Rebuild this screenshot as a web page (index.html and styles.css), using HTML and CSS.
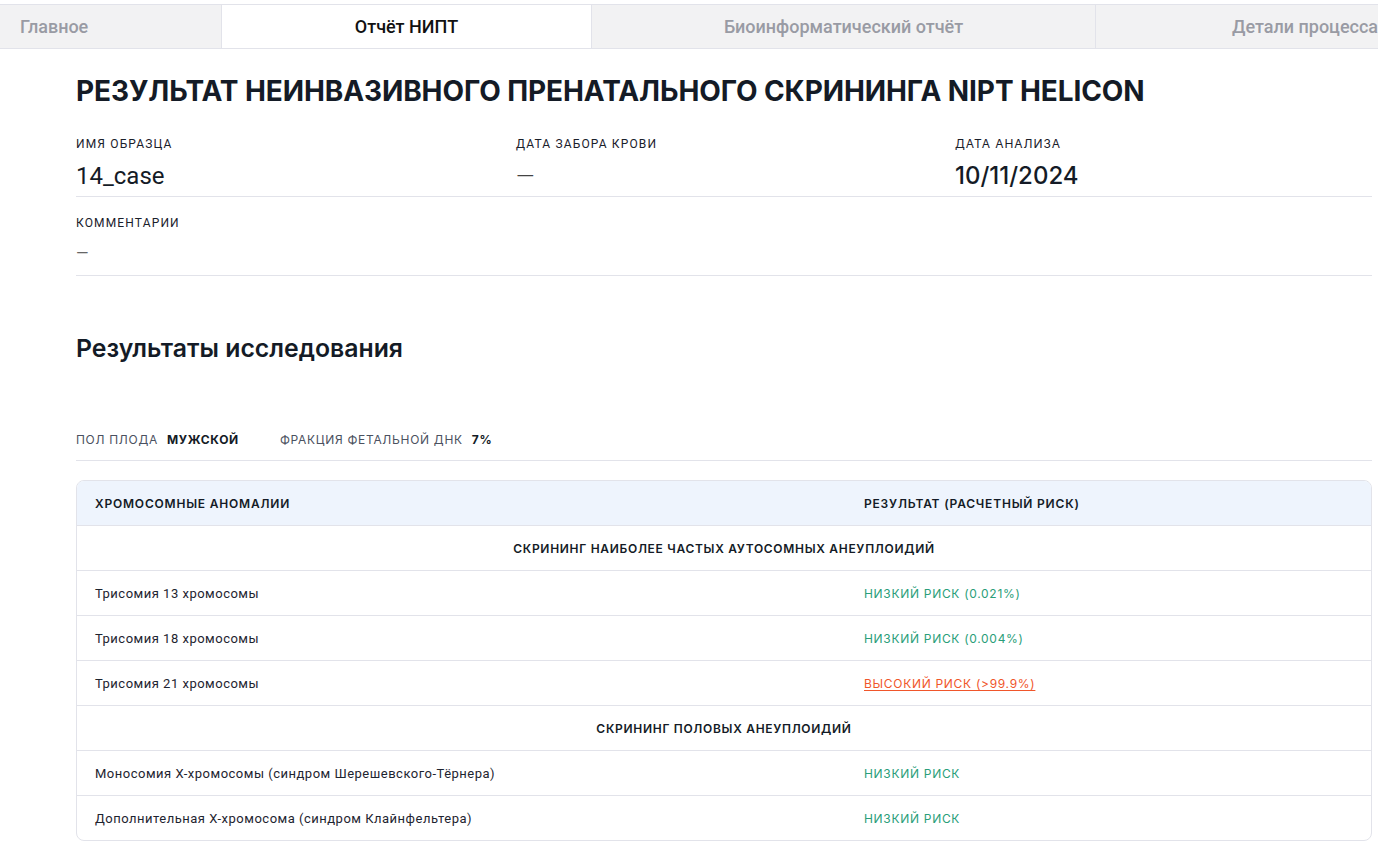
FILE: index.html
```html
<!DOCTYPE html>
<html lang="ru">
<head>
<meta charset="utf-8">
<title>Отчёт НИПТ</title>
<link rel="stylesheet" href="styles.css">
</head>
<body>
<nav class="tabs">
  <div class="tab tab-first">Главное</div>
  <div class="tab tab-active">Отчёт НИПТ</div>
  <div class="tab tab-bio">Биоинформатический отчёт</div>
  <div class="tab tab-last">Детали процесса</div>
</nav>
<main class="page">
  <h1 class="title">РЕЗУЛЬТАТ НЕИНВАЗИВНОГО ПРЕНАТАЛЬНОГО СКРИНИНГА NIPT HELICON</h1>
  <section class="info">
    <div class="info-row">
      <div class="field">
        <div class="label">ИМЯ ОБРАЗЦА</div>
        <div class="value">14_case</div>
      </div>
      <div class="field">
        <div class="label">ДАТА ЗАБОРА КРОВИ</div>
        <div class="value value-dash">—</div>
      </div>
      <div class="field">
        <div class="label label-inter">ДАТА АНАЛИЗА</div>
        <div class="value value-inter">10/11/2024</div>
      </div>
    </div>
    <div class="info-row">
      <div class="field">
        <div class="label">КОММЕНТАРИИ</div>
        <div class="value value-small">—</div>
      </div>
    </div>
  </section>
  <h2 class="subtitle">Результаты исследования</h2>
  <div class="summary">
    <span class="sum-item"><span class="sum-label">ПОЛ ПЛОДА</span><span class="sum-value">МУЖСКОЙ</span></span>
    <span class="sum-item"><span class="sum-label">ФРАКЦИЯ ФЕТАЛЬНОЙ ДНК</span><span class="sum-value">7%</span></span>
  </div>
  <div class="table">
    <div class="row row-head">
      <div class="cell c1">ХРОМОСОМНЫЕ АНОМАЛИИ</div>
      <div class="cell c2">РЕЗУЛЬТАТ (РАСЧЕТНЫЙ РИСК)</div>
    </div>
    <div class="row row-section"><div class="cell">СКРИНИНГ НАИБОЛЕЕ ЧАСТЫХ АУТОСОМНЫХ АНЕУПЛОИДИЙ</div></div>
    <div class="row">
      <div class="cell c1 name">Трисомия 13 хромосомы</div>
      <div class="cell c2 low">НИЗКИЙ РИСК (0.021%)</div>
    </div>
    <div class="row">
      <div class="cell c1 name">Трисомия 18 хромосомы</div>
      <div class="cell c2 low">НИЗКИЙ РИСК (0.004%)</div>
    </div>
    <div class="row">
      <div class="cell c1 name">Трисомия 21 хромосомы</div>
      <div class="cell c2 high">ВЫСОКИЙ РИСК (&gt;99.9%)</div>
    </div>
    <div class="row row-section"><div class="cell">СКРИНИНГ ПОЛОВЫХ АНЕУПЛОИДИЙ</div></div>
    <div class="row">
      <div class="cell c1 name">Моносомия X-хромосомы (синдром Шерешевского-Тёрнера)</div>
      <div class="cell c2 low">НИЗКИЙ РИСК</div>
    </div>
    <div class="row">
      <div class="cell c1 name">Дополнительная X-хромосома (синдром Клайнфельтера)</div>
      <div class="cell c2 low">НИЗКИЙ РИСК</div>
    </div>
  </div>
</main>
</body>
</html>
```
FILE: styles.css
```css
* { box-sizing: border-box; }
html, body { margin: 0; padding: 0; background: #fff; }
body {
  font-family: Inter, "Noto Sans", sans-serif;
  color: #141b26;
  overflow: hidden;
}
.tabs {
  margin-top: 4px;
  display: flex;
  height: 45px;
  background: #f2f2f3;
  border-top: 1px solid #e2e3ea;
  border-bottom: 1px solid #e2e3ea;
  overflow: hidden;
  font-family: Roboto, "Liberation Sans", sans-serif;
  font-size: 18px;
  font-weight: 500;
  color: #999ba4;
}
.tab {
  flex: none;
  display: flex;
  align-items: center;
  justify-content: center;
  border-right: 1px solid #e2e3ea;
}
.tab-first { width: 222px; justify-content: flex-start; padding-left: 20px; }
.tab-active { width: 370px; background: #fff; color: #111; }
.tab-bio { width: 504px; }
.tab-last { width: 418px; border-right: none; }
.page { padding: 0 6px 0 76px; }
.title {
  margin: 25px 0 0;
  font-size: 28px;
  line-height: 34px;
  font-weight: 700;
  letter-spacing: -0.1px;
  color: #141b26;
}
.info { margin-top: 10px; }
.info-row {
  display: grid;
  grid-template-columns: 440px 439px 1fr;
  border-bottom: 1px solid #e2e3ea;
  height: 79px;
  padding-top: 18px;
}
.label {
  font-family: Roboto, "Liberation Sans", sans-serif;
  font-size: 12px;
  line-height: 16px;
  font-weight: 400;
  letter-spacing: 1.15px;
  color: #1a202b;
}
.label-inter { font-family: Inter, sans-serif; letter-spacing: 0.95px; }
.value {
  margin-top: 10px;
  font-family: Roboto, "Liberation Sans", sans-serif;
  font-size: 24px;
  line-height: 28px;
  color: #141b26;
}
.value-dash { color: #444; font-weight: 300; }
.value-inter { font-family: Inter, sans-serif; font-weight: 500; }
.value-small { font-size: 16px; line-height: 20px; color: #666; margin-top: 13px; }
.subtitle {
  margin: 57px 0 0;
  font-size: 24.8px;
  line-height: 30px;
  font-weight: 600;
  color: #141b26;
}
.summary {
  margin-top: 65px;
  height: 33px;
  display: flex;
  gap: 41px;
  padding-top: 4px;
  border-bottom: 1px solid #e2e3ea;
  font-size: 12px;
  line-height: 16px;
  letter-spacing: 0.7px;
}
.sum-label { color: #4b5160; margin-right: 9px; }
.sum-value { font-weight: 700; color: #141b26; }
.table {
  margin-top: 19px;
  width: 1296px;
  border: 1px solid #e2e3ea;
  border-radius: 8px;
  overflow: hidden;
}
.row {
  display: flex;
  height: 45px;
  align-items: center;
  border-top: 1px solid #e2e3ea;
  font-size: 12px;
}
.row-head {
  border-top: none;
  height: 44px;
  background: #eef4fd;
  font-weight: 600;
  letter-spacing: 0.8px;
  color: #141b26;
}
.c1 { width: 787px; padding-left: 18px; }
.c2 { flex: 1; }
.row-section { justify-content: center; font-weight: 600; letter-spacing: 0.7px; color: #141b26; }
.name {
  font-family: Roboto, "Liberation Sans", sans-serif;
  font-size: 13px;
  letter-spacing: 0.5px;
  color: #1e2430;
}
.low { color: #2a9e79; letter-spacing: 0.7px; }
.high { color: #f0562b; letter-spacing: 0.7px; text-decoration: underline; text-underline-offset: 2px; }
```
